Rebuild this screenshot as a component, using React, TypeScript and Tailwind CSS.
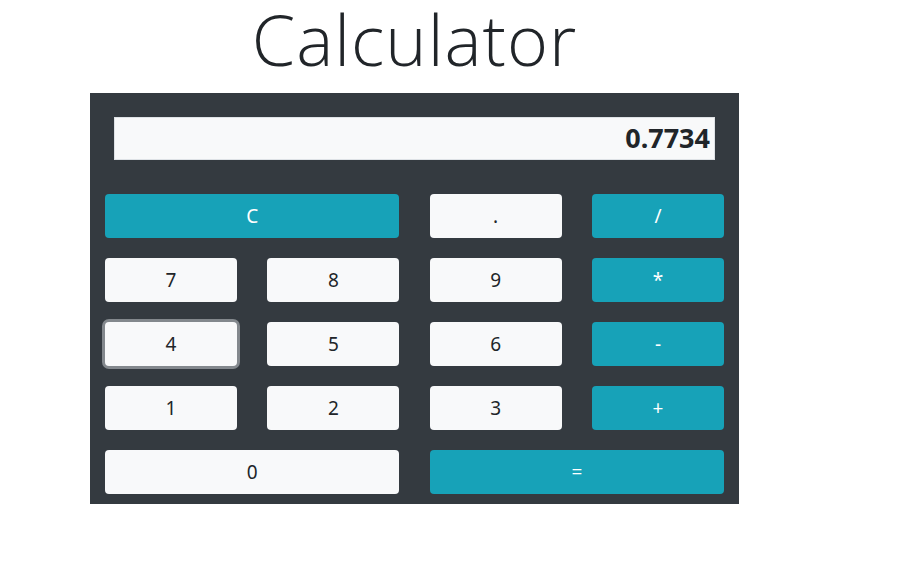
import React from "react";

type B = { label: string; kind: "light" | "info"; span?: boolean; focus?: boolean };

const buttons: B[] = [
  { label: "C", kind: "info", span: true },
  { label: ".", kind: "light" },
  { label: "/", kind: "info" },
  { label: "7", kind: "light" },
  { label: "8", kind: "light" },
  { label: "9", kind: "light" },
  { label: "*", kind: "info" },
  { label: "4", kind: "light", focus: true },
  { label: "5", kind: "light" },
  { label: "6", kind: "light" },
  { label: "-", kind: "info" },
  { label: "1", kind: "light" },
  { label: "2", kind: "light" },
  { label: "3", kind: "light" },
  { label: "+", kind: "info" },
  { label: "0", kind: "light", span: true },
  { label: "=", kind: "info", span: true },
];

export default function App() {
  return (
    <div className="w-[920px] h-[580px] bg-white" style={{ fontFamily: '"Noto Sans", "Open Sans", sans-serif' }}>
      <div className="ml-[90px] w-[649px] h-[93px] flex justify-center pt-[4px]">
        <h1
          className="text-[70px] leading-[70px] font-light tracking-[1px] text-[#212529]"
          style={{ fontFamily: '"Open Sans", "Noto Sans", sans-serif' }}
        >
          Calculator
        </h1>
      </div>
      <div className="ml-[90px] w-[649px] bg-[#343a40] pt-[24px] pb-[10px] px-[15px]">
        <div className="mx-[9px] h-[43px] bg-[#f8f9fa] border border-[#dee2e6] flex items-center justify-end pr-[4px]">
          <span className="text-[27px] font-bold text-[#212529]">0.7734</span>
        </div>
        <div className="mt-[34px] grid grid-cols-[132px_132px_132px_132px] justify-between gap-y-[20px]">
          {buttons.map((b) => (
            <button
              key={b.label}
              className={
                "h-[44px] rounded-[4px] text-[19px] flex items-center justify-center " +
                (b.span ? "col-span-2 " : "") +
                (b.kind === "info" ? "bg-[#17a2b8] text-white " : "bg-[#f8f9fa] text-[#212529] ") +
                (b.focus ? "ring-[3px] ring-[#83888d]" : "")
              }
            >
              {b.label}
            </button>
          ))}
        </div>
      </div>
    </div>
  );
}
